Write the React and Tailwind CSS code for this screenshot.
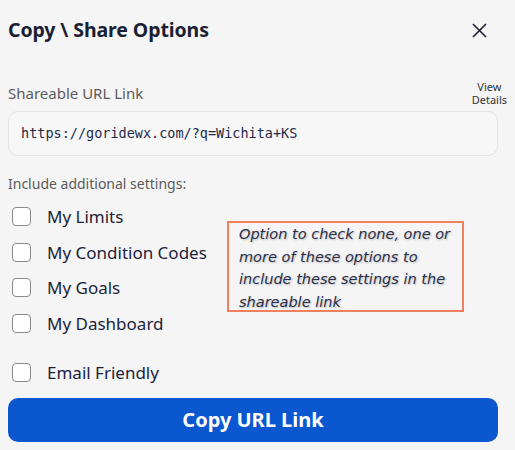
import { useState } from 'react'

const OPTIONS = ['My Limits', 'My Condition Codes', 'My Goals', 'My Dashboard']

function Check({ label, checked, onChange }) {
  return (
    <label className="flex items-center h-[35.5px] cursor-pointer">
      <span
        onClick={onChange}
        className={`ml-1 w-[19px] h-[19px] rounded-[4px] border-[1.5px] border-[#8a8a8a] ${checked ? 'bg-[#0b57d0]' : 'bg-white'}`}
      />
      <span className="ml-[16px] text-[17px] text-[#1b1f3a]">{label}</span>
    </label>
  )
}

export default function App() {
  const [checked, setChecked] = useState({})
  const toggle = (key) => setChecked((prev) => ({ ...prev, [key]: !prev[key] }))

  return (
    <div className="w-[515px] h-[450px] bg-[#f5f5f5] overflow-hidden font-['Noto_Sans',sans-serif]">
      <div className="w-[490px] ml-2">
        <div className="flex items-center justify-between pt-[6px] h-[54px]">
          <h1 className="text-[19.5px] font-bold text-[#1b1f33] tracking-[-0.1px]">Copy \ Share Options</h1>
          <svg width="15" height="15" viewBox="0 0 15 15" className="mr-[11px]">
            <path d="M1 1 L14 14 M14 1 L1 14" stroke="#1b1f33" strokeWidth="1.6" />
          </svg>
        </div>

        <div className="flex items-start justify-between mt-[20px]">
          <span className="mt-[8px] text-[15px] text-[#5b5b5b] leading-[22px]">Shareable URL Link</span>
          <span className="mt-[6px] -mr-[9px] flex flex-col items-center text-[11px] leading-[13px] text-[#333]">
            <span>View</span>
            <span>Details</span>
          </span>
        </div>

        <div className="mt-[5px] h-[45px] rounded-[10px] border border-[#e4e4e4] bg-[#f7f7f7] flex items-center px-[12px]">
          <span className="font-['DejaVu_Sans_Mono',monospace] text-[13.5px] text-[#1e2a48]">https://goridewx.com/?q=Wichita+KS</span>
        </div>

        <div className="mt-[18px] text-[14px] text-[#5b5b5b] leading-[20px]">Include additional settings:</div>

        <div className="flex mt-[5px]">
          <div className="w-[219px]">
            {OPTIONS.map((opt) => (
              <Check key={opt} label={opt} checked={!!checked[opt]} onChange={() => toggle(opt)} />
            ))}
          </div>
          <div className="mt-[22px] w-[237px] h-[91px] border-2 border-[#f0805e] pl-[10px] pr-[4px] font-['DejaVu_Sans',sans-serif] italic text-[14.5px] leading-[22.5px] text-[#2a2f48] [text-shadow:1px_1px_2px_rgba(0,0,0,0.25)]">
            Option to check none, one or more of these options to include these settings in the shareable link
          </div>
        </div>

        <div className="mt-[14px]">
          <Check label="Email Friendly" checked={!!checked.email} onChange={() => toggle('email')} />
        </div>

        <button className="mt-[7px] w-full h-[44px] rounded-[10px] bg-[#0b57d0] text-white text-[20px] font-bold">
          Copy URL Link
        </button>
      </div>
    </div>
  )
}
